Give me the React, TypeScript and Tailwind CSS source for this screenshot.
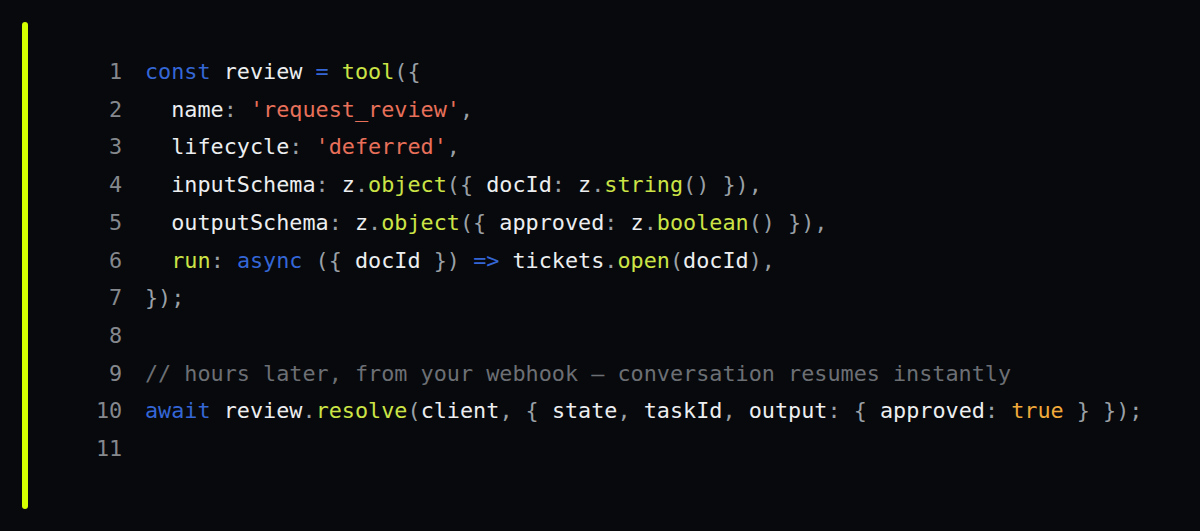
import React from "react";

type Tok = [string, string];

const K = "text-[#3566d6]"; // keyword
const F = "text-[#cce446]"; // function / call
const S = "text-[#e8705a]"; // string
const B = "text-[#f0a93a]"; // boolean
const C = "text-[#6c6f74]"; // comment
const P = "text-[#9aa0a6]"; // punctuation
const T = "text-[#eceef0]"; // plain

const lines: Tok[][] = [
  [[K, "const"], [T, " review "], [K, "="], [T, " "], [F, "tool"], [P, "({"]],
  [[T, "  name"], [P, ": "], [S, "'request_review'"], [P, ","]],
  [[T, "  lifecycle"], [P, ": "], [S, "'deferred'"], [P, ","]],
  [
    [T, "  inputSchema"], [P, ": "], [T, "z"], [P, "."], [F, "object"], [P, "({ "],
    [T, "docId"], [P, ": "], [T, "z"], [P, "."], [F, "string"], [P, "() }),"],
  ],
  [
    [T, "  outputSchema"], [P, ": "], [T, "z"], [P, "."], [F, "object"], [P, "({ "],
    [T, "approved"], [P, ": "], [T, "z"], [P, "."], [F, "boolean"], [P, "() }),"],
  ],
  [
    [T, "  "], [F, "run"], [P, ": "], [K, "async"], [P, " ({ "], [T, "docId"], [P, " }) "],
    [K, "=>"], [T, " tickets"], [P, "."], [F, "open"], [P, "("], [T, "docId"], [P, "),"],
  ],
  [[P, "});"]],
  [],
  [[C, "// hours later, from your webhook — conversation resumes instantly"]],
  [
    [K, "await"], [T, " review"], [P, "."], [F, "resolve"], [P, "("], [T, "client"], [P, ", { "],
    [T, "state"], [P, ", "], [T, "taskId"], [P, ", "], [T, "output"], [P, ": { "],
    [T, "approved"], [P, ": "], [B, "true"], [P, " } });"],
  ],
  [],
];

const App = () => {
  return (
    <div className="flex h-[531px] w-[1200px] overflow-hidden bg-[#07090c] font-['DejaVu_Sans_Mono',monospace] text-[21.8px] leading-[37.7px]">
      <div className="ml-[22px] my-[22px] w-[6px] rounded-full bg-[#d4ff00]" />
      <div className="ml-[68px] flex pt-[53px]">
        <div className="w-[26px] text-right text-[#85888d] whitespace-pre">
          {lines.map((_, i) => (
            <div key={i}>{i + 1}</div>
          ))}
        </div>
        <div className="ml-[23px] whitespace-pre">
          {lines.map((line, i) => (
            <div key={i}>
              {line.length === 0
                ? "\u00a0"
                : line.map(([cls, text], j) => (
                    <span key={j} className={cls}>
                      {text}
                    </span>
                  ))}
            </div>
          ))}
        </div>
      </div>
    </div>
  );
};

export default App;
